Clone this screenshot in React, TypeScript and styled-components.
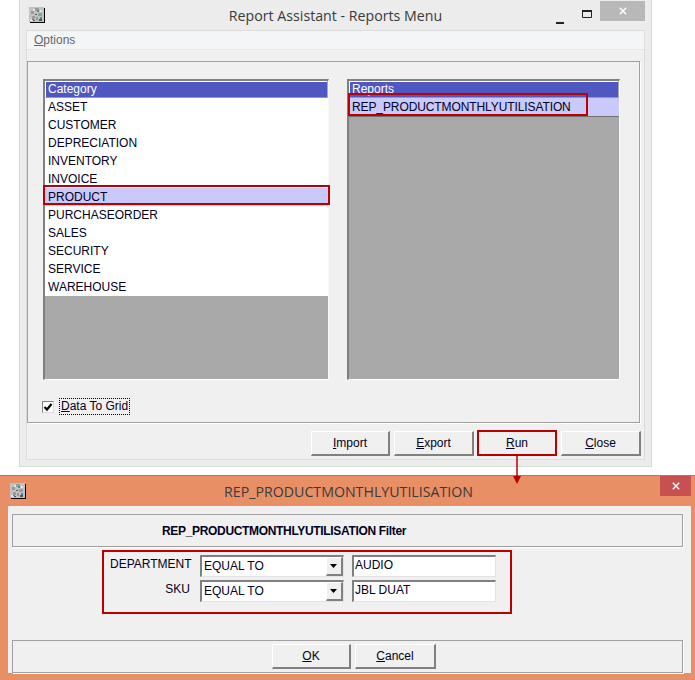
import React from "react";
import styled, { createGlobalStyle } from "styled-components";

const GlobalStyle = createGlobalStyle`
    html, body {
        margin: 0;
        padding: 0;
        background: #ffffff;
    }
    * {
        box-sizing: border-box;
    }
`;

const Page = styled.div`
    width: 695px;
    height: 680px;
    overflow: hidden;
    background: #ffffff;
    font-family: "Liberation Sans", Arial, sans-serif;
    font-size: 12px;
    color: #000022;
`;

const MainWindow = styled.div`
    width: 633px;
    height: 467px;
    margin-left: 19px;
    padding: 0 6px 6px 6px;
    display: flex;
    flex-direction: column;
    background: #ececec;
    border: 1px solid #d9d9d9;
    border-top: none;
`;

const TitleBar = styled.div`
    position: relative;
    height: 30px;
    flex: none;
    display: flex;
    align-items: center;
    justify-content: center;
`;

const TitleText = styled.div<{ $shift?: number }>`
    font-family: "Open Sans", sans-serif;
    font-size: 14.2px;
    color: #3a3a3a;
    margin-right: ${(p) => p.$shift ?? 0}px;
`;

const AppIconSlot = styled.div<{ $left: number; $top: number }>`
    position: absolute;
    left: ${(p) => p.$left}px;
    top: ${(p) => p.$top}px;
    width: 16px;
    height: 16px;
`;

const ControlSlot = styled.div<{ $left: number; $top: number; $w: number; $h: number }>`
    position: absolute;
    left: ${(p) => p.$left}px;
    top: ${(p) => p.$top}px;
    width: ${(p) => p.$w}px;
    height: ${(p) => p.$h}px;
`;

const CloseButton = styled.div<{ $bg: string; $w: number; $h: number; $top: number }>`
    position: absolute;
    right: 0;
    top: ${(p) => p.$top}px;
    width: ${(p) => p.$w}px;
    height: ${(p) => p.$h}px;
    background: ${(p) => p.$bg};
    display: flex;
    align-items: center;
    justify-content: center;
`;

const Client = styled.div`
    flex: 1;
    display: flex;
    flex-direction: column;
    background: #f0f0f0;
    border: 1px solid #dcdcdc;
`;

const MenuBar = styled.div`
    height: 19px;
    flex: none;
    padding-left: 7px;
    display: flex;
    align-items: center;
    background: #f4f5f7;
    border-bottom: 1px solid #e8e8e8;
    color: #666666;
`;

const MenuStrip = styled.div`
    height: 11px;
    flex: none;
`;

const GroupBox = styled.div`
    width: 613px;
    height: 362px;
    flex: none;
    padding: 17px 0 0 15px;
    border: 1px solid #a0a0a0;
    box-shadow: 1px 1px 0 #ffffff;
`;

const ListsRow = styled.div`
    display: flex;
    gap: 18px;
`;

const ListPanel = styled.div<{ $w: number }>`
    position: relative;
    width: ${(p) => p.$w}px;
    height: 301px;
    display: flex;
    flex-direction: column;
    background: #a9a9a9;
    border-top: 2px solid #808080;
    border-left: 2px solid #808080;
    border-right: 1px solid #f8f8f8;
    border-bottom: 1px solid #ffffff;
`;

const ListHeader = styled.div`
    height: 17px;
    flex: none;
    margin-right: 1px;
    padding-left: 2px;
    line-height: 14px;
    color: #ffffff;
    background: #4f57c0;
    border-top: 1px solid #ffffff;
    border-bottom: 1px solid #9a9a9a;
    border-left: 1px solid #ffffff;
`;

const ListRow = styled.div<{ $selected?: boolean }>`
    position: relative;
    height: 18px;
    flex: none;
    padding-left: 3px;
    line-height: 18px;
    white-space: nowrap;
    background: ${(p) => (p.$selected ? "#c9c9fb" : "#ffffff")};
`;

const ReportRow = styled(ListRow)`
    height: 19px;
    letter-spacing: -0.1px;
    border-bottom: 1px solid #707070;
`;

const RedMark = styled.div<{ $w: number; $h: number; $left: number; $top: number }>`
    position: absolute;
    left: ${(p) => p.$left}px;
    top: ${(p) => p.$top}px;
    width: ${(p) => p.$w}px;
    height: ${(p) => p.$h}px;
    border: 2px solid #bb0000;
    pointer-events: none;
`;

const CheckRow = styled.div`
    margin-top: 18px;
    margin-left: -1px;
    display: flex;
    align-items: center;
    gap: 5px;
`;

const CheckBox = styled.div`
    width: 12px;
    height: 12px;
    display: flex;
    align-items: center;
    justify-content: center;
    background: #ffffff;
    border-top: 1px solid #808080;
    border-left: 1px solid #808080;
    border-right: 1px solid #dddddd;
    border-bottom: 1px solid #dddddd;
`;

const CheckLabel = styled.div`
    height: 17px;
    padding: 0 1px;
    line-height: 15px;
    border: 1px dotted #000000;
`;

const Underlined = styled.span`
    text-decoration: underline;
`;

const ButtonBar = styled.div`
    flex: 1;
    padding: 8px 3px 0 0;
    display: flex;
    justify-content: flex-end;
    gap: 4px;
`;

const PushButton = styled.div<{ $w: number }>`
    position: relative;
    width: ${(p) => p.$w}px;
    height: 25px;
    display: flex;
    align-items: center;
    justify-content: center;
    background: #f0f0f0;
    border-top: 1px solid #ffffff;
    border-left: 1px solid #ffffff;
    border-right: 2px solid #808080;
    border-bottom: 2px solid #808080;
`;

const RunButton = styled(PushButton)`
    border: 2px solid #bb0000;
    margin: -1px 0 0 -1px;
    height: 26px;
`;

const ArrowSlot = styled.div`
    position: absolute;
    left: 33px;
    top: 23px;
    width: 10px;
    height: 30px;
`;

const Dialog = styled.div`
    width: 695px;
    height: 205px;
    margin-top: 8px;
    padding: 0 4px 7px 8px;
    display: flex;
    flex-direction: column;
    background: #e98f66;
    border-top: 1px solid #bf7350;
`;

const DialogClient = styled.div`
    flex: 1;
    padding: 8px 8px 0 4px;
    display: flex;
    flex-direction: column;
    background: #f0f0f0;
`;

const FilterHeader = styled.div`
    height: 33px;
    flex: none;
    padding-left: 149px;
    display: flex;
    align-items: center;
    font-weight: 700;
    letter-spacing: -0.33px;
    border: 1px solid #a0a0a0;
    box-shadow: 1px 1px 0 #ffffff;
`;

const FilterBox = styled.div`
    width: 410px;
    height: 64px;
    margin: 3px 0 0 90px;
    padding: 3px 0 0 6px;
    display: grid;
    grid-template-columns: 80px 144px 152px;
    grid-auto-rows: 25px;
    border: 2px solid #bb0000;
`;

const FieldLabel = styled.div`
    padding-top: 2px;
    line-height: 15px;
    text-align: right;
`;

const ComboBox = styled.div`
    width: 144px;
    height: 22px;
    margin-left: 10px;
    padding-left: 2px;
    display: flex;
    align-items: center;
    justify-content: space-between;
    background: #ffffff;
    border-top: 2px solid #808080;
    border-left: 2px solid #808080;
    border-right: 1px solid #e2e2e2;
    border-bottom: 1px solid #e2e2e2;
`;

const ComboText = styled.span`
    margin-bottom: 2px;
`;

const ComboArrow = styled.div`
    width: 17px;
    height: 19px;
    display: flex;
    align-items: center;
    justify-content: center;
    background: #f0f0f0;
    border-top: 1px solid #ffffff;
    border-left: 1px solid #ffffff;
    border-right: 2px solid #808080;
    border-bottom: 2px solid #808080;
`;

const TextField = styled.div`
    width: 144px;
    height: 22px;
    margin-left: 18px;
    padding-left: 1px;
    line-height: 17px;
    background: #ffffff;
    border-top: 2px solid #808080;
    border-left: 2px solid #808080;
    border-right: 1px solid #e2e2e2;
    border-bottom: 1px solid #e2e2e2;
`;

const DialogFooter = styled.div`
    height: 33px;
    flex: none;
    margin-top: auto;
    padding: 3px 0 0 259px;
    display: flex;
    gap: 4px;
    border: 1px solid #a0a0a0;
    box-shadow: 1px 1px 0 #ffffff;
`;

const categories = [
    "ASSET",
    "CUSTOMER",
    "DEPRECIATION",
    "INVENTORY",
    "INVOICE",
    "PRODUCT",
    "PURCHASEORDER",
    "SALES",
    "SECURITY",
    "SERVICE",
    "WAREHOUSE",
];

const filters = [
    { label: "DEPARTMENT", value: "AUDIO" },
    { label: "SKU", value: "JBL DUAT" },
];

function AppIcon() {
    return (
        <svg width="16" height="16" viewBox="0 0 16 16">
            <rect x="1" y="1" width="15" height="15" fill="#000000" />
            <rect x="0" y="0" width="15" height="15" fill="#c2c2c2" />
            <path d="M2 4h3v3H2zM6 1h4v3H6zM9 6h4v3H9zM3 9h3v3H3zM7 10h2v3H7z" fill="#9a9a9a" />
            <path d="M4 2h2v2H4zM11 3h2v2h-2zM1 12h3v2H1z" fill="#e4e4e4" />
            <path d="M8 3h2v2H8zM11 10h2v2h-2zM3 12h2v1H3z" fill="#2f9aa8" />
            <path d="M6 7h2v1H6zM10 12h3v2h-3zM4 13h2v1H4z" fill="#555555" />
        </svg>
    );
}

function CloseGlyph({ size }: { size: number }) {
    return (
        <svg width={size} height={size} viewBox="0 0 10 10">
            <path d="M1 1L9 9M9 1L1 9" stroke="#ffffff" strokeWidth="1.8" fill="none" />
        </svg>
    );
}

function DownTriangle() {
    return (
        <svg width="8" height="4" viewBox="0 0 8 4">
            <path d="M0 0H7L3.5 4Z" fill="#000000" />
        </svg>
    );
}

export default function App() {
    return (
        <Page>
            <GlobalStyle />
            <MainWindow>
                <TitleBar>
                    <AppIconSlot $left={3} $top={7}>
                        <AppIcon />
                    </AppIconSlot>
                    <TitleText>Report Assistant - Reports Menu</TitleText>
                    <ControlSlot $left={530} $top={13} $w={8} $h={2}>
                        <svg width="8" height="2" viewBox="0 0 8 2">
                            <rect width="8" height="2" fill="#222222" />
                        </svg>
                    </ControlSlot>
                    <ControlSlot $left={556} $top={7} $w={10} $h={8}>
                        <svg width="10" height="8" viewBox="0 0 10 8">
                            <path d="M0.5 1.5H9.5V7.5H0.5Z" fill="none" stroke="#222222" />
                            <rect width="10" height="2" fill="#222222" />
                        </svg>
                    </ControlSlot>
                    <CloseButton $bg="#b8b8b8" $w={45} $h={20} $top={1}>
                        <CloseGlyph size={8} />
                    </CloseButton>
                </TitleBar>
                <Client>
                    <MenuBar>
                        <span>
                            <Underlined>O</Underlined>ptions
                        </span>
                    </MenuBar>
                    <MenuStrip />
                    <GroupBox>
                        <ListsRow>
                            <ListPanel $w={286}>
                                <ListHeader>Category</ListHeader>
                                {categories.map((name) => (
                                    <ListRow key={name} $selected={name === "PRODUCT"}>
                                        {name}
                                        {name === "PRODUCT" && (
                                            <RedMark $w={287} $h={20} $left={-2} $top={-3} />
                                        )}
                                    </ListRow>
                                ))}
                            </ListPanel>
                            <ListPanel $w={273}>
                                <ListHeader>Reports</ListHeader>
                                <ReportRow $selected>
                                    REP_PRODUCTMONTHLYUTILISATION
                                    <RedMark $w={240} $h={23} $left={-1} $top={-5} />
                                </ReportRow>
                            </ListPanel>
                        </ListsRow>
                        <CheckRow>
                            <CheckBox>
                                <svg width="10" height="10" viewBox="0 0 10 10">
                                    <path d="M1.5 5L4 7.5L8.5 2" fill="none" stroke="#000000" strokeWidth="2.2" />
                                </svg>
                            </CheckBox>
                            <CheckLabel>
                                <Underlined>D</Underlined>ata To Grid
                            </CheckLabel>
                        </CheckRow>
                    </GroupBox>
                    <ButtonBar>
                        <PushButton $w={79}>
                            <span>
                                <Underlined>I</Underlined>mport
                            </span>
                        </PushButton>
                        <PushButton $w={80}>
                            <span>
                                <Underlined>E</Underlined>xport
                            </span>
                        </PushButton>
                        <RunButton $w={80}>
                            <span>
                                <Underlined>R</Underlined>un
                            </span>
                            <ArrowSlot>
                                <svg width="10" height="30" viewBox="0 0 10 30">
                                    <path d="M5 0V22" stroke="#bb0000" strokeWidth="1.5" fill="none" />
                                    <path d="M1 21H9L5 29Z" fill="#bb0000" />
                                </svg>
                            </ArrowSlot>
                        </RunButton>
                        <PushButton $w={80}>
                            <span>
                                <Underlined>C</Underlined>lose
                            </span>
                        </PushButton>
                    </ButtonBar>
                </Client>
            </MainWindow>
            <Dialog>
                <TitleBar>
                    <AppIconSlot $left={2} $top={7}>
                        <AppIcon />
                    </AppIconSlot>
                    <TitleText $shift={2}>REP_PRODUCTMONTHLYUTILISATION</TitleText>
                    <CloseButton $bg="#c75050" $w={31} $h={20} $top={0}>
                        <CloseGlyph size={8} />
                    </CloseButton>
                </TitleBar>
                <DialogClient>
                    <FilterHeader>REP_PRODUCTMONTHLYUTILISATION Filter</FilterHeader>
                    <FilterBox>
                        {filters.map((f) => (
                            <React.Fragment key={f.label}>
                                <FieldLabel>{f.label}</FieldLabel>
                                <ComboBox>
                                    <ComboText>EQUAL TO</ComboText>
                                    <ComboArrow>
                                        <DownTriangle />
                                    </ComboArrow>
                                </ComboBox>
                                <TextField>{f.value}</TextField>
                            </React.Fragment>
                        ))}
                    </FilterBox>
                    <DialogFooter>
                        <PushButton $w={79}>
                            <span>
                                <Underlined>O</Underlined>K
                            </span>
                        </PushButton>
                        <PushButton $w={81}>
                            <span>
                                <Underlined>C</Underlined>ancel
                            </span>
                        </PushButton>
                    </DialogFooter>
                </DialogClient>
            </Dialog>
        </Page>
    );
}
